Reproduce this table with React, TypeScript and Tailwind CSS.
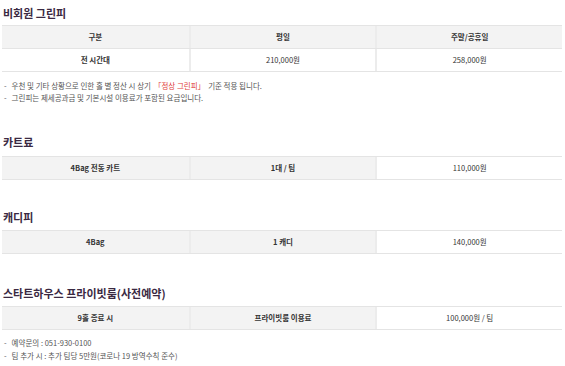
const font = { fontFamily: '"Noto Sans CJK KR", "Noto Sans", sans-serif' };

type Cell = { text: React.ReactNode; gray?: boolean; bold?: boolean };

function Title({ children, className }: { children: React.ReactNode; className: string }) {
  return (
    <h2 className={`text-[11px] font-bold leading-[16px] text-[#3a2942] pl-[1px] ${className}`}>
      {children}
    </h2>
  );
}

function Row({ cells, top }: { cells: Cell[]; top?: boolean }) {
  return (
    <div className={`grid grid-cols-3 border-b border-[#e4e4e4] ${top ? "border-t" : ""}`}>
      {cells.map((c, i) => (
        <div
          key={i}
          className={`flex h-[22px] items-center justify-center text-[7.5px] text-[#333] ${
            c.gray ? "bg-[#f3f3f3]" : "bg-white"
          } ${c.bold ? "font-bold" : ""} ${i > 0 ? "border-l-2 border-[#ececec]" : ""}`}
        >
          {c.text}
        </div>
      ))}
    </div>
  );
}

function Note({ children, h = "h-[12px]" }: { children: React.ReactNode; h?: string }) {
  return (
    <li className={`flex ${h} items-center text-[7.5px] text-[#555]`}>
      <span className="mr-[5px] ml-[2px]">-</span>
      {children}
    </li>
  );
}

export default function App() {
  return (
    <div className="w-[565px] min-h-[366px] bg-white pl-[2px] pr-[3px]" style={font}>
      {/* 비회원 그린피 */}
      <Title className="pt-[5px]">비회원 그린피</Title>
      <div className="mt-[4px]">
        <Row
          top
          cells={[
            { text: "구분", gray: true, bold: true },
            { text: "평일", gray: true, bold: true },
            { text: "주말/공휴일", gray: true, bold: true },
          ]}
        />
        <Row
          cells={[
            { text: "전 시간대", bold: true },
            { text: "210,000원" },
            { text: "258,000원" },
          ]}
        />
      </div>
      <ul className="mt-[8px]">
        <Note>
          우천 및 기타 상황으로 인한 홀 별 정산 시 상기
          <span className="mx-[3px] text-[#e0403a]">「정상 그린피」</span>
          기준 적용 됩니다.
        </Note>
        <Note>그린피는 제세공과금 및 기본시설 이용료가 포함된 요금입니다.</Note>
      </ul>

      {/* 카트료 */}
      <Title className="mt-[30px]">카트료</Title>
      <div className="mt-[6px]">
        <Row
          top
          cells={[
            { text: "4Bag 전동 카트", gray: true, bold: true },
            { text: "1대 / 팀", gray: true, bold: true },
            { text: "110,000원" },
          ]}
        />
      </div>

      {/* 캐디피 */}
      <Title className="mt-[29px]">캐디피</Title>
      <div className="mt-[5px]">
        <Row
          top
          cells={[
            { text: "4Bag", gray: true, bold: true },
            { text: "1 캐디", gray: true, bold: true },
            { text: "140,000원" },
          ]}
        />
      </div>

      {/* 스타트하우스 프라이빗룸 */}
      <Title className="mt-[31px]">스타트하우스 프라이빗룸(사전예약)</Title>
      <div className="mt-[5px]">
        <Row
          top
          cells={[
            { text: "9홀 종료 시", gray: true, bold: true },
            { text: "프라이빗룸 이용료", gray: true, bold: true },
            { text: "100,000원 / 팀" },
          ]}
        />
      </div>
      <ul className="mt-[6px]">
        <Note h="h-[13px]">예약문의 : 051-930-0100</Note>
        <Note h="h-[13px]">팀 추가 시 : 추가 팀당 5만원(코로나 19 방역수칙 준수)</Note>
      </ul>
    </div>
  );
}
